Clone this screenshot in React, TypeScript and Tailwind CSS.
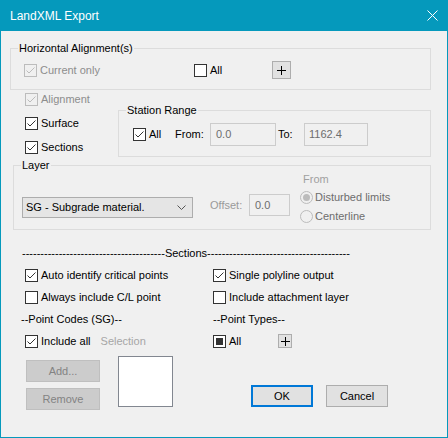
import React from "react";

type CheckProps = { checked?: boolean; disabled?: boolean; filled?: boolean };

function Check({ checked = false, disabled = false, filled = false }: CheckProps) {
  const border = disabled ? "border-[#bcbcbc]" : "border-[#333333]";
  const bg = disabled ? "bg-[#f0f0f0]" : "bg-white";
  return (
    <span className={`w-[13px] h-[13px] shrink-0 border ${border} ${bg} flex items-center justify-center`}>
      {checked && (
        <svg width="11" height="11" viewBox="0 0 11 11">
          <path d="M1.5 5.5 L4 8 L9.5 2.5" fill="none" stroke={disabled ? "#bcbcbc" : "#333333"} strokeWidth="1" />
        </svg>
      )}
      {filled && <span className="w-[7px] h-[7px] bg-[#333333]" />}
    </span>
  );
}

function Radio({ checked = false }: { checked?: boolean }) {
  return (
    <span className="w-[13px] h-[13px] shrink-0 rounded-full border border-[#bcbcbc] bg-[#f0f0f0] flex items-center justify-center">
      {checked && <span className="w-[7px] h-[7px] rounded-full bg-[#bcbcbc]" />}
    </span>
  );
}

function CheckRow({ label, checked, disabled, filled, className = "" }: CheckProps & { label: string; className?: string }) {
  return (
    <div className={`flex items-center h-[13px] ${className}`}>
      <Check checked={checked} disabled={disabled} filled={filled} />
      <span className={`ml-[3px] leading-[13px] whitespace-nowrap ${disabled ? "text-[#8d8d8d]" : "text-black"}`}>{label}</span>
    </div>
  );
}

function Group({ label, className = "", children }: { label: string; className?: string; children?: React.ReactNode }) {
  return (
    <div className={`relative border border-[#dcdcdc] ${className}`}>
      <span className="absolute -top-[7px] left-[7px] px-[1px] bg-[#f0f0f0] leading-[13px] whitespace-nowrap">{label}</span>
      {children}
    </div>
  );
}

function PlusBtn({ className = "" }: { className?: string }) {
  return (
    <div className={`border border-[#adadad] bg-[#e1e1e1] flex items-center justify-center ${className}`}>
      <svg width="9" height="9" viewBox="0 0 9 9">
        <path d="M0 4.5 H9 M4.5 0 V9" stroke="#000" strokeWidth="1" />
      </svg>
    </div>
  );
}

const DASHES = "---------------------------------------";

export default function App() {
  return (
    <div className="w-[448px] h-[438px] bg-[#f0f0f0] border-x border-b border-[#0599bc] flex flex-col font-['Liberation_Sans',Arial,sans-serif] text-[11px] text-black overflow-hidden">
      {/* Title bar */}
      <div className="h-[31px] shrink-0 bg-[#0599bc] flex items-center pl-[9px] pr-[9px] justify-between">
        <span className="text-white text-[12px] leading-[14px]">LandXML Export</span>
        <svg width="11" height="11" viewBox="0 0 11 11">
          <path d="M0.5 0.5 L10.5 10.5 M10.5 0.5 L0.5 10.5" stroke="#ffffff" strokeWidth="1" />
        </svg>
      </div>

      {/* Horizontal alignment */}
      <Group label="Horizontal Alignment(s)" className="mt-[17px] ml-[9px] w-[421px] h-[42px] shrink-0">
        <div className="mt-[12px] h-[18px] pl-[13px] flex items-center">
          <div className="w-[170px]">
            <CheckRow label="Current only" checked disabled />
          </div>
          <div className="w-[78px]">
            <CheckRow label="All" />
          </div>
          <PlusBtn className="w-[19px] h-[18px]" />
        </div>
      </Group>

      {/* Alignment / Surface / Sections + Station range */}
      <div className="flex shrink-0">
        <div className="ml-[24px] w-[93px] flex flex-col gap-[11px] mt-[3px]">
          <CheckRow label="Alignment" checked disabled />
          <CheckRow label="Surface" checked />
          <CheckRow label="Sections" checked />
        </div>
        <Group label="Station Range" className="mt-[20px] w-[313px] h-[47px]">
          <div className="mt-[12px] h-[23px] pl-[14px] flex items-center">
            <div className="w-[42px]">
              <CheckRow label="All" checked />
            </div>
            <span className="w-[35px] leading-[13px]">From:</span>
            <div className="w-[66px] h-[23px] border border-[#cccccc] flex items-center pl-[5px] text-[#6d6d6d]">0.0</div>
            <span className="ml-[2px] w-[26px] leading-[13px]">To:</span>
            <div className="w-[64px] h-[23px] border border-[#cccccc] flex items-center pl-[4px] text-[#6d6d6d]">1162.4</div>
          </div>
        </Group>
      </div>

      {/* Layer */}
      <Group label="Layer" className="mt-[8px] ml-[12px] w-[418px] h-[65px] shrink-0">
        <div className="flex items-start">
          <div className="ml-[8px] mt-[31px] w-[171px] h-[21px] border border-[#adadad] bg-[#e5e5e5] flex items-center justify-between pl-[3px] pr-[6px]">
            <span className="leading-[13px] whitespace-nowrap">SG - Subgrade material.</span>
            <svg width="9" height="5" viewBox="0 0 9 5">
              <path d="M0.5 0.5 L4.5 4.5 L8.5 0.5" fill="none" stroke="#555555" strokeWidth="1" />
            </svg>
          </div>
          <div className="ml-[17px] mt-[28px] flex items-center">
            <span className="w-[39px] leading-[13px] text-[#9a9a9a]">Offset:</span>
            <div className="w-[41px] h-[22px] border border-[#cccccc] flex items-center pl-[5px] text-[#6d6d6d]">0.0</div>
          </div>
          <div className="ml-[10px] mt-[7px] flex flex-col">
            <span className="pl-[3px] leading-[13px] text-[#a0a0a0]">From</span>
            <div className="mt-[5px] flex items-center h-[13px]">
              <Radio checked />
              <span className="ml-[2px] leading-[13px] text-[#6d6d6d] whitespace-nowrap">Disturbed limits</span>
            </div>
            <div className="mt-[6px] flex items-center h-[13px]">
              <Radio />
              <span className="ml-[2px] leading-[13px] text-[#6d6d6d] whitespace-nowrap">Centerline</span>
            </div>
          </div>
        </div>
      </Group>

      {/* Sections separator */}
      <div className="mt-[17px] ml-[21px] h-[13px] flex items-center leading-[13px] shrink-0 whitespace-nowrap">
        <span>{DASHES}</span>
        <span>Sections</span>
        <span>{DASHES}</span>
      </div>

      {/* Sections options */}
      <div className="mt-[4px] ml-[24px] grid grid-cols-[188px_200px] auto-rows-[22px] items-center shrink-0">
        <CheckRow label="Auto identify critical points" checked />
        <CheckRow label="Single polyline output" checked />
        <CheckRow label="Always include C/L point" />
        <CheckRow label="Include attachment layer" />
        <span className="-ml-[4px] leading-[13px]">--Point Codes (SG)--</span>
        <span className="leading-[13px]">--Point Types--</span>
        <div className="flex items-center">
          <CheckRow label="Include all" checked />
          <span className="ml-[10px] leading-[13px] text-[#a6a6a6]">Selection</span>
        </div>
        <div className="flex items-center">
          <div className="w-[65px]">
            <CheckRow label="All" filled />
          </div>
          <PlusBtn className="w-[14px] h-[14px]" />
        </div>
      </div>

      {/* Bottom */}
      <div className="flex items-start shrink-0">
        <div className="ml-[25px] mt-[8px] w-[74px] flex flex-col gap-[6px]">
          <div className="h-[22px] border border-[#bfbfbf] bg-[#cccccc] text-[#838383] flex items-center justify-center">Add...</div>
          <div className="h-[22px] border border-[#bfbfbf] bg-[#cccccc] text-[#838383] flex items-center justify-center">Remove</div>
        </div>
        <div className="ml-[18px] mt-[4px] w-[55px] h-[51px] border border-[#828790] bg-white" />
        <div className="ml-[78px] mt-[33px] w-[62px] h-[22px] border-2 border-[#0078d7] bg-[#e1e1e1] flex items-center justify-center">OK</div>
        <div className="ml-[13px] mt-[33px] w-[62px] h-[22px] border border-[#adadad] bg-[#e1e1e1] flex items-center justify-center">Cancel</div>
      </div>
    </div>
  );
}
